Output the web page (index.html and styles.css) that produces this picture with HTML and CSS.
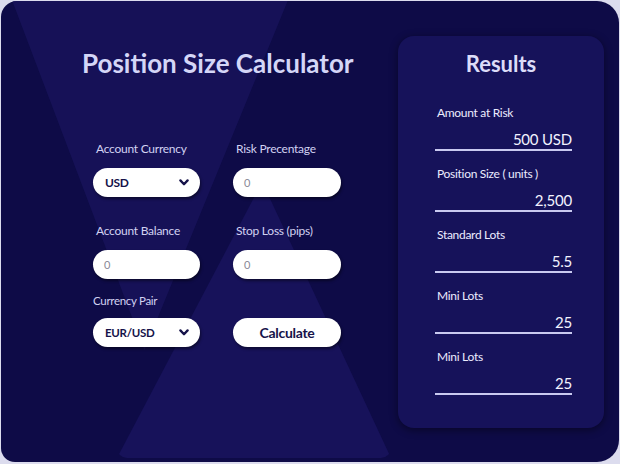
FILE: index.html
```html
<!DOCTYPE html>
<html lang="en">
<head>
<meta charset="utf-8">
<title>Position Size Calculator</title>
<link rel="stylesheet" href="styles.css">
</head>
<body>
<div class="card">
  <section class="calc">
    <h1 class="title">Position Size Calculator</h1>
    <div class="form">
      <div class="field">
        <span class="label">Account Currency</span>
        <div class="pill select"><span class="sel-text">USD</span><svg class="chev" width="10" height="7" viewBox="0 0 10 7"><path d="M1.4 1.4 L5 5.2 L8.6 1.4" fill="none" stroke="#16134a" stroke-width="2.3" stroke-linecap="round" stroke-linejoin="round"/></svg></div>
      </div>
      <div class="field">
        <span class="label">Risk Precentage</span>
        <div class="pill input"><span class="ph">0</span></div>
      </div>
      <div class="field r2">
        <span class="label">Account Balance</span>
        <div class="pill input"><span class="ph">0</span></div>
      </div>
      <div class="field r2">
        <span class="label">Stop Loss (pips)</span>
        <div class="pill input"><span class="ph">0</span></div>
      </div>
      <div class="field r3">
        <span class="label small">Currency Pair</span>
        <div class="pill select"><span class="sel-text sm">EUR/USD</span><svg class="chev" width="10" height="7" viewBox="0 0 10 7"><path d="M1.4 1.4 L5 5.2 L8.6 1.4" fill="none" stroke="#16134a" stroke-width="2.3" stroke-linecap="round" stroke-linejoin="round"/></svg></div>
      </div>
      <div class="field r3 btn-cell">
        <button class="pill btn">Calculate</button>
      </div>
    </div>
  </section>
  <aside class="results">
    <h2 class="res-title">Results</h2>
    <div class="item"><div class="ilabel">Amount at Risk</div><div class="ivalue">500 USD</div></div>
    <div class="item"><div class="ilabel">Position Size ( units )</div><div class="ivalue">2,500</div></div>
    <div class="item"><div class="ilabel">Standard Lots</div><div class="ivalue">5.5</div></div>
    <div class="item"><div class="ilabel">Mini Lots</div><div class="ivalue">25</div></div>
    <div class="item"><div class="ilabel">Mini Lots</div><div class="ivalue">25</div></div>
  </aside>
</div>
</body>
</html>
```
FILE: styles.css
```css
* { box-sizing: border-box; }
html, body { margin: 0; padding: 0; }
body {
  background: #dcdcee;
  width: 620px;
  height: 464px;
  padding: 1px 1px 0 1px;
  font-family: "Lato", "Open Sans", sans-serif;
}
.card {
  position: relative;
  overflow: hidden;
  width: 618px;
  height: 461px;
  background: #0e0b47;
  border-radius: 16px 22px 22px 14px;
  display: flex;
  padding-right: 14px;
}
.card::before,
.card::after {
  content: "";
  position: absolute;
  pointer-events: none;
}
.card::before {
  left: 11px;
  top: -1px;
  width: 276px;
  height: 350px;
  background: #17135b;
  clip-path: polygon(0 0, 100% 0, 48% 100%);
  opacity: 0.85;
}
.card::after {
  left: 116px;
  top: 181px;
  width: 274px;
  height: 276px;
  background: #17125a;
  clip-path: polygon(53% 0, 100% 100%, 0 100%);
  border-radius: 0 0 10px 10px;
}
.calc {
  position: relative;
  z-index: 1;
  width: 397px;
  flex: none;
  padding-left: 81px;
  padding-top: 47px;
}
.title {
  margin: 0;
  font-size: 26px;
  line-height: 30px;
  font-weight: 700;
  color: #d4d6f7;
  white-space: nowrap;
}
.form {
  margin-top: 63px;
  margin-left: 11px;
  display: grid;
  grid-template-columns: 107px 108px;
  column-gap: 33px;
}
.field {
  display: flex;
  flex-direction: column;
}
.r2 { margin-top: 26px; }
.r3 { margin-top: 15px; }
.label {
  font-size: 12px;
  letter-spacing: -0.25px;
  line-height: 16px;
  color: #d2d2f2;
  padding-left: 3px;
  margin-bottom: 11px;
  white-space: nowrap;
}
.label.small {
  font-size: 11.5px;
  letter-spacing: -0.3px;
  line-height: 14px;
  padding-left: 0;
  margin-bottom: 10px;
}
.btn-cell { justify-content: flex-end; }
.pill {
  height: 29px;
  width: 100%;
  border-radius: 15px;
  background: #ffffff;
  box-shadow: 1px 2px 3px rgba(0, 0, 0, 0.45);
  display: flex;
  align-items: center;
  border: none;
}
.select {
  justify-content: space-between;
  padding: 0 11px 0 12px;
}
.sel-text {
  font-size: 12px;
  letter-spacing: -0.4px;
  font-weight: 700;
  color: #16134a;
}
.sel-text.sm { font-size: 11.5px; letter-spacing: -0.3px; }
.chev { display: block; }
.input { padding-left: 11px; }
.ph {
  font-size: 11px;
  color: #8a8a98;
}
.btn {
  justify-content: center;
  font-family: inherit;
  font-size: 14px;
  letter-spacing: -0.3px;
  font-weight: 700;
  color: #16134a;
  padding: 0;
}
.results {
  position: relative;
  z-index: 1;
  margin-top: 35px;
  width: 206px;
  height: 392px;
  flex: none;
  background: #16125a;
  border-radius: 16px;
  box-shadow: 0 2px 8px rgba(0, 0, 0, 0.45);
  padding: 15px 32px 0 37px;
}
.res-title {
  margin: 0 0 28px -5px;
  text-align: center;
  font-size: 22px;
  line-height: 26px;
  font-weight: 700;
  color: #dcdcf8;
}
.item {
  margin-bottom: 15px;
}
.ilabel {
  font-size: 12px;
  letter-spacing: -0.3px;
  line-height: 16px;
  color: #ececff;
  padding-left: 2px;
  margin-bottom: 8px;
  white-space: nowrap;
}
.ivalue {
  font-size: 15px;
  letter-spacing: -0.2px;
  line-height: 20px;
  color: #f2f2ff;
  text-align: right;
  border-bottom: 2px solid #c9c9f0;
}
```
